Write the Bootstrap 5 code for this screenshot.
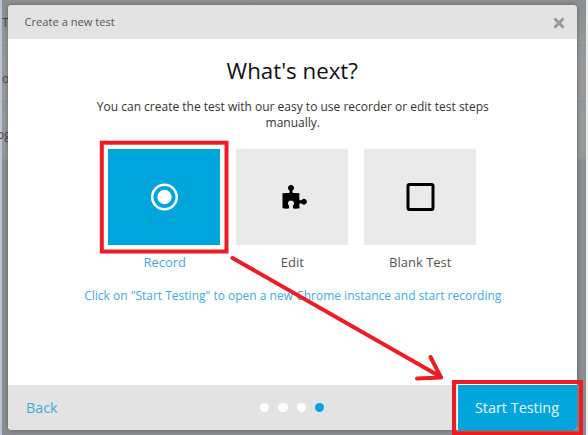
<!DOCTYPE html>
<html lang="en">
<head>
<meta charset="utf-8">
<title>Create a new test</title>
<link href="https://cdn.jsdelivr.net/npm/bootstrap@5.3.0/dist/css/bootstrap.min.css" rel="stylesheet">
<style>
body{width:588px;height:435px;overflow:hidden;font-family:"Open Sans",sans-serif;background:#929497}
.backdrop-page{inset:0;border-left:2px solid #b9c4d6;border-right:2px solid #eceded;background:linear-gradient(#8c8e91,#999 12%,#97989a 36%,#8b8d91 37%)}
.backdrop-page .stripe{height:10px;background:#94979c;border:1px solid #8593a3;border-width:1px 0;left:0;right:0}
.backdrop-page .s1{top:45px}.backdrop-page .s2{top:101px}.backdrop-page .s3{top:157px;height:1px;border-bottom:0}
.backdrop-page .frag{font-size:12px;line-height:16px;color:#444;white-space:nowrap;left:0}
.f1{top:15px}.f2{top:71px}.backdrop-page .f3{top:127px;left:-5px}
.dialog-box{width:568.500px;height:425px;margin:5px 0 0 8px;border-radius:4px;overflow:hidden;box-shadow:0 0 4px rgba(0,0,0,.35)}
.dialog-head{height:34px;background:#e3e3e3;padding:1px 11.500px 0 16.500px;font-size:11.15px;color:#555}
.dialog-foot{height:45px;background:#e3e3e3}
.close-x{width:12px;height:12px}
.headline{font-size:22.3px;line-height:32px;margin-top:16px;color:#111}
.intro{font-size:12px;line-height:16px;margin-top:12px;color:#333;padding-left:1px}
.choices{margin-top:18px;gap:16px}
.choice{width:112px;font-size:13px;line-height:18px;color:#555}
.tile{height:96px;background:#eaeaea;margin-bottom:8px}
.choice.active .tile{background:#00a5db}
.sky{color:#3fabd8}
.choice .sky{padding-left:1px}
.hint{font-size:12px;line-height:16px;margin-top:17px;padding-left:1px}
.back-link{font-size:14.3px;width:252px;padding-left:18px}
.dots{gap:9.2px}
.dot{width:9.2px;height:9.2px;border-radius:50%;background:#fff}
.dot.on{background:#00a5db}
.start-btn{width:120px;background:#00a5db;font-size:14.4px;color:#e9f7fc;border-left:1px solid #fff}
.overlay{inset:0;pointer-events:none}
</style>
<script src="https://cdn.jsdelivr.net/npm/bootstrap@5.3.0/dist/js/bootstrap.bundle.min.js"></script>
</head>
<body class="position-relative">
<div class="backdrop-page position-absolute">
  <div class="stripe s1 position-absolute"></div>
  <div class="stripe s2 position-absolute"></div>
  <div class="stripe s3 position-absolute"></div>
  <div class="frag f1 position-absolute">T</div>
  <div class="frag f2 position-absolute">o</div>
  <div class="frag f3 position-absolute">og</div>
</div>
<div class="d-flex">
<main class="dialog-box bg-white d-flex flex-column position-relative">
  <header class="dialog-head d-flex align-items-center justify-content-between">
    <span>Create a new test</span>
    <svg class="close-x" viewBox="0 0 12 12"><path d="M2.300 2.300l7.400 7.400M9.700 2.300L2.300 9.700" stroke="#999" stroke-width="3" stroke-linecap="round"/></svg>
  </header>
  <section class="flex-grow-1 text-center">
    <h1 class="headline fw-normal mb-0">What's next?</h1>
    <p class="intro mb-0">You can create the test with our easy to use recorder or edit test steps<br>manually.</p>
    <div class="choices d-flex justify-content-center">
      <div class="choice active"><div class="tile d-flex align-items-center justify-content-center">
        <svg width="28" height="28" viewBox="0 0 28 28"><circle cx="14.500" cy="14" r="12.300" fill="none" stroke="#fff" stroke-width="2.600"/><circle cx="14.500" cy="14" r="7.200" fill="#fff"/></svg>
      </div><span class="sky">Record</span></div>
      <div class="choice"><div class="tile d-flex align-items-center justify-content-center">
        <svg width="28" height="28" viewBox="-1 -0.500 28 28" overflow="visible"><path d="M3.500 9.700Q7 9.200 10 9.500Q11 8.500 10.500 7A3 3 0 1 1 13.500 7Q13 8.500 14 9.500Q17 9.200 20.500 9.700Q20 13 20.500 16.500Q21.500 17.300 23 16.300A2.800 2.800 0 1 1 23 20.200Q21.500 19.300 20.500 20Q20.200 22.500 20.700 24.700Q17.500 25.400 14.300 25Q13.300 23.500 14.300 21.800Q15.400 20.500 15 19Q14.200 16.900 12 16.900Q9.800 16.900 9 19Q8.600 20.500 9.700 21.800Q10.700 23.500 9.700 25Q6.500 25.400 3.500 24.800Z"/></svg>
      </div>Edit</div>
      <div class="choice"><div class="tile d-flex align-items-center justify-content-center">
        <svg width="28" height="28" viewBox="-0.500 0 28 28" overflow="visible"><rect x="1.500" y="1.500" width="25" height="25" rx="1.500" fill="none" stroke="#000" stroke-width="3"/></svg>
      </div>Blank Test</div>
    </div>
    <p class="hint sky mb-0">Click on "Start Testing" to open a new Chrome instance and start recording</p>
  </section>
  <footer class="dialog-foot d-flex">
    <div class="back-link sky d-flex align-items-center">Back</div>
    <div class="dots d-flex align-items-center"><i class="dot"></i><i class="dot"></i><i class="dot"></i><i class="dot on"></i></div>
    <div class="start-btn ms-auto d-flex align-items-center justify-content-center">Start Testing</div>
  </footer>
</main>
</div>
<svg class="overlay position-absolute" width="588" height="435" viewBox="0 0 588 435" fill="none" stroke="#ed1c24">
  <rect x="101.800" y="142.700" width="124.700" height="108.800" stroke-width="4"/>
  <rect x="454" y="382" width="127" height="51.500" stroke-width="4"/>
  <path d="M232.500 258L441 377M430.500 357L441 377.500L417 378.500" stroke-width="4" stroke-linecap="round" stroke-linejoin="round"/>
</svg>
</body>
</html>
